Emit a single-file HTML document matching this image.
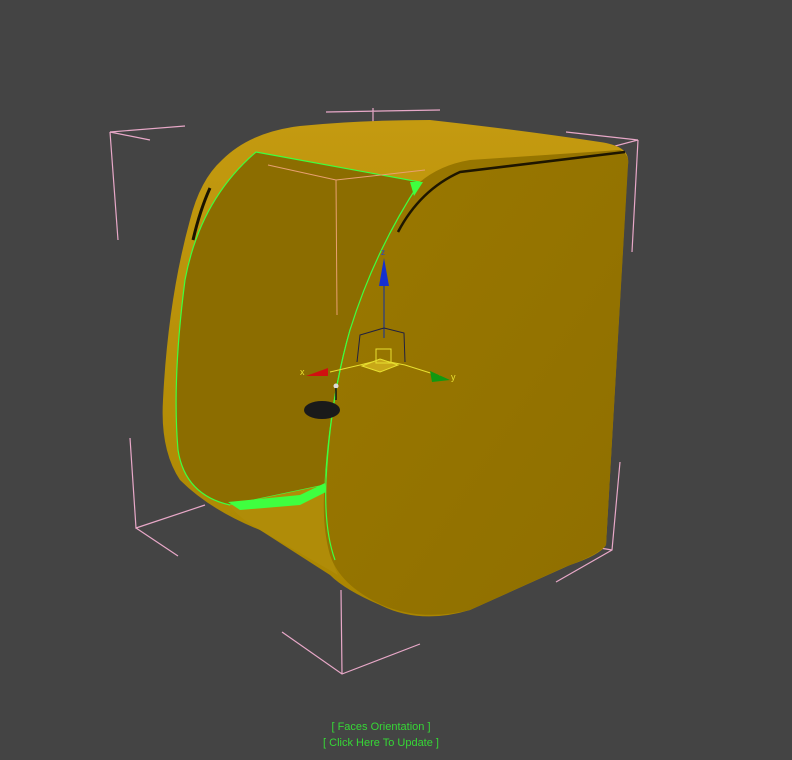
<!DOCTYPE html>
<html><head><meta charset="utf-8"><style>
html,body{margin:0;padding:0;background:#444444;}
body{width:792px;height:760px;overflow:hidden;position:relative;font-family:"Liberation Sans",sans-serif;}
.t{position:absolute;left:-30px;width:822px;text-align:center;color:#36d836;font-size:11px;}
</style></head><body>
<svg width="792" height="760" viewBox="0 0 792 760" style="position:absolute;left:0;top:0">
<defs>
<linearGradient id="top" x1="0" y1="0" x2="0" y2="1"><stop offset="0" stop-color="#c49a10"/><stop offset="1" stop-color="#a98500"/></linearGradient>
<linearGradient id="front" x1="0" y1="0" x2="1" y2="1"><stop offset="0" stop-color="#9a7800"/><stop offset="1" stop-color="#8f6f00"/></linearGradient>
</defs>
<g stroke="#e8a8c8" stroke-width="1.2" fill="none">
<path d="M110 132 L185 126 M110 132 L118 240 M110 132 L150 140"/>
<path d="M326 112 L440 110 M373 108 L373 122"/>
<path d="M566 132 L638 140 M638 140 L632 252 M600 150 L638 140"/>
<path d="M130 438 L136 528 L205 505 M136 528 L178 556"/>
<path d="M620 462 L612 550 L556 582 M612 550 L600 548"/>
<path d="M282 632 L342 674 L420 644 M342 674 L341 590"/>
</g>
<path d="M222 160 Q250 132 300 126 Q360 120 430 120 Q520 130 600 142 Q628 146 628 160 L606 545 Q600 555 570 565 L470 610 Q420 625 380 605 Q345 590 330 575 L260 530 Q210 510 180 480 Q160 450 163 400 Q168 300 190 220 Q200 180 222 160 Z" fill="url(#top)"/>
<path d="M256 152 L420 182 Q380 250 350 330 Q330 400 325 485 L230 505 Q185 495 178 450 Q172 380 185 280 Q200 200 256 152 Z" fill="#8c6d00" stroke="#3fff3f" stroke-width="1.2"/>
<path d="M210 188 Q200 210 193 240" stroke="#1a1400" stroke-width="3" fill="none"/>
<path d="M230 505 L325 485 Q322 540 338 575 L260 530 Q235 515 230 505Z" fill="#b08c08"/>
<path d="M420 182 Q440 165 470 160 L620 150 Q630 155 628 165 L606 545 Q598 555 565 567 L470 610 Q420 622 380 604 Q340 585 330 555 Q320 520 326 470 Q332 400 350 330 Q375 250 420 182 Z" fill="url(#front)"/>
<path d="M398 232 Q420 190 460 172 L625 152" stroke="#1e1600" stroke-width="2.5" fill="none"/>
<path d="M420 182 Q375 250 350 330 Q330 400 326 480 Q324 530 335 560" stroke="#3fff3f" stroke-width="1.2" fill="none"/>
<path d="M410 182 L423 182 L414 196 Z" fill="#3fff3f"/>
<path d="M228 502 L300 495 L325 483 L326 492 L300 505 L240 510 Z" fill="#3fff3f"/>
<g stroke="#e8a070" stroke-width="1" fill="none">
<path d="M268 165 L336 180 L425 170 M336 180 L337 315"/>
</g>
<g stroke-width="1">
<path d="M384 278 L384 338" stroke="#1030a0"/>
<path d="M384 328 L404 333 L405 362 M384 328 L360 335 L357 362" stroke="#202040" fill="none"/>
<path d="M330 372 L360 365 L380 360 L405 365 L440 376" stroke="#e8e030" fill="none"/>
<path d="M362 366 L380 372 L398 365 L380 359 Z" fill="#c8a818" stroke="#e8e030"/>
<rect x="376" y="349" width="15" height="14" fill="none" stroke="#e8e030"/>
</g>
<path d="M384 258 L379 286 L389 286 Z" fill="#1530d0"/>
<path d="M306 376 L328 368 L328 376 Z" fill="#d01010"/>
<path d="M430 371 L450 380 L432 382 Z" fill="#119911"/>
<text x="300" y="375" fill="#e8e030" font-size="9" font-family="Liberation Sans">x</text>
<text x="451" y="380" fill="#e8e030" font-size="9" font-family="Liberation Sans">y</text>
<text x="381" y="255" fill="#2040d0" font-size="8" font-family="Liberation Sans">z</text>
<ellipse cx="322" cy="410" rx="18" ry="9" fill="#1a1a1a"/>
<circle cx="336" cy="386" r="2.5" fill="#ddd"/>
<path d="M336 388 L336 400" stroke="#111" stroke-width="1.5"/>
</svg>
<div class="t" style="top:721px">[ Faces Orientation ]</div>
<div class="t" style="top:737px">[ Click Here To Update ]</div>
</body></html>
